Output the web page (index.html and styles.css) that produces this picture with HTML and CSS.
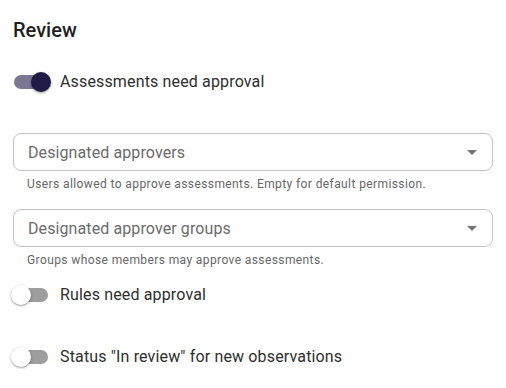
FILE: index.html
```html
<!DOCTYPE html>
<html>
<head>
<meta charset="utf-8">
<link rel="stylesheet" href="styles.css">
</head>
<body>
<div class="panel">
  <h2 class="title">Review</h2>
  <label class="switch-row first">
    <span class="switch on"><span class="track"></span><span class="thumb"></span></span>
    <span class="label">Assessments need approval</span>
  </label>
  <div class="field first-field">
    <div class="select">
      <span class="placeholder">Designated approvers</span>
      <svg class="arrow" width="10" height="5" viewBox="0 0 10 5"><path d="M0 0L5 5L10 0Z" fill="#757575"/></svg>
    </div>
    <div class="helper">Users allowed to approve assessments. Empty for default permission.</div>
  </div>
  <div class="field">
    <div class="select">
      <span class="placeholder">Designated approver groups</span>
      <svg class="arrow" width="10" height="5" viewBox="0 0 10 5"><path d="M0 0L5 5L10 0Z" fill="#757575"/></svg>
    </div>
    <div class="helper">Groups whose members may approve assessments.</div>
  </div>
  <label class="switch-row second">
    <span class="switch"><span class="track"></span><span class="thumb"></span></span>
    <span class="label">Rules need approval</span>
  </label>
  <label class="switch-row third">
    <span class="switch"><span class="track"></span><span class="thumb"></span></span>
    <span class="label">Status "In review" for new observations</span>
  </label>
</div>
</body>
</html>
```
FILE: styles.css
```css
html, body {
  margin: 0;
  padding: 0;
  background: #ffffff;
}
body {
  font-family: Roboto, "Liberation Sans", sans-serif;
  color: #212121;
}
.panel {
  padding: 16px 13px 0 13px;
  display: flex;
  flex-direction: column;
}
.title {
  margin: 0;
  font-size: 20px;
  font-weight: 500;
  line-height: 28px;
  color: #1f1f1f;
}
.switch-row {
  display: flex;
  align-items: center;
  height: 24px;
}
.switch-row.first { margin-top: 26px; }
.switch-row.second { margin-top: 13px; }
.switch-row.third { margin-top: 38px; }
.switch {
  position: relative;
  width: 38px;
  height: 24px;
  flex: 0 0 auto;
  margin-right: 9px;
}
.track {
  position: absolute;
  left: 1px;
  top: 5px;
  width: 34px;
  height: 14px;
  border-radius: 7px;
  background: #9e9e9e;
}
.thumb {
  position: absolute;
  left: -2px;
  top: 2px;
  width: 20px;
  height: 20px;
  border-radius: 50%;
  background: #ffffff;
  box-shadow: 0 1px 3px rgba(0,0,0,0.3), 0 1px 1px rgba(0,0,0,0.14);
}
.switch.on .track { background: #7c7894; }
.switch.on .thumb {
  left: 18px;
  background: #201c4a;
}
.label {
  font-size: 16px;
  line-height: 24px;
  color: #2e2e2e;
  letter-spacing: 0.15px;
}
.field { display: flex; flex-direction: column; }
.field.first-field { margin-top: 39px; }
.field + .field { margin-top: 15px; }
.select {
  height: 38px;
  box-sizing: border-box;
  border: 1px solid #c4c4c4;
  border-radius: 8px;
  display: flex;
  align-items: center;
  padding: 0 15px 0 14px;
}
.placeholder {
  flex: 1;
  font-size: 16px;
  color: #6b6b6b;
  letter-spacing: 0.1px;
}
.arrow { flex: 0 0 auto; }
.helper {
  margin-top: 3px;
  padding-left: 14px;
  font-size: 12px;
  line-height: 20px;
  color: #666666;
  letter-spacing: 0.4px;
}
```
